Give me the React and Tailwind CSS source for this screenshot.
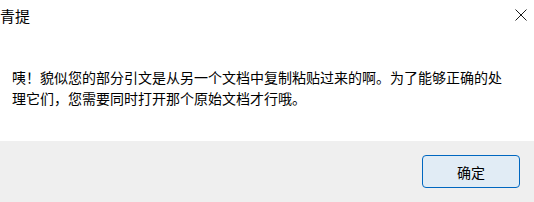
export default function App() {
  return (
    <div
      className="flex h-[202px] w-[534px] flex-col bg-white text-black"
      style={{ fontFamily: '"Noto Sans CJK SC", "Noto Sans", sans-serif' }}
    >
      {/* title bar */}
      <div className="flex h-[30px] items-center justify-between pl-0 pr-[6px]">
        <span className="text-[15px] leading-none">青提</span>
        <svg width="12" height="12" viewBox="0 0 12 12" className="mr-[1px]">
          <path d="M0.5 0.5 L11.5 11.5 M11.5 0.5 L0.5 11.5" stroke="#1a1a1a" strokeWidth="1" fill="none" />
        </svg>
      </div>

      {/* message */}
      <div className="h-[111px] pl-3 pt-[37px]">
        <p className="w-[496px] text-[14px] leading-[21px]">
          咦！貌似您的部分引文是从另一个文档中复制粘贴过来的啊。为了能够正确的处理它们，您需要同时打开那个原始文档才行哦。
        </p>
      </div>

      {/* footer */}
      <div className="flex h-[61px] items-center justify-end bg-[#efefef] pr-[14px]">
        <button className="flex h-[33px] w-[98px] items-center justify-center rounded-[4px] border border-[#0067c0] bg-[#e1ecf5] text-[14px] leading-none text-black">
          确定
        </button>
      </div>
    </div>
  )
}
